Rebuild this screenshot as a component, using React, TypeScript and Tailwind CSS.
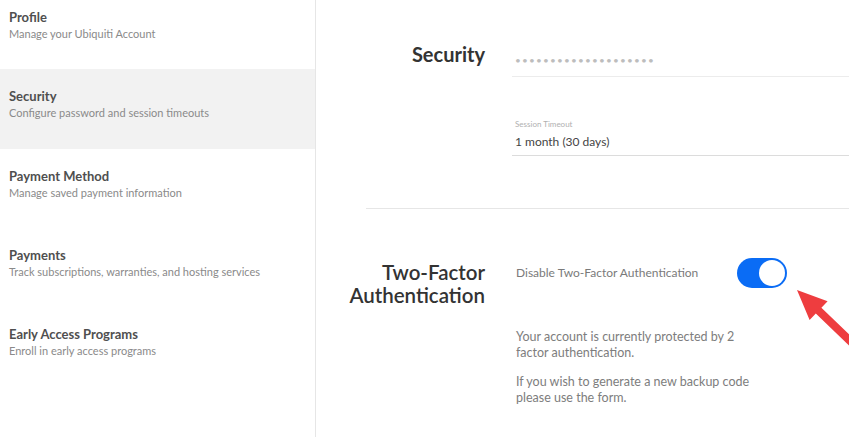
import React from "react";

const NAV = [
  { title: "Profile", sub: "Manage your Ubiquiti Account" },
  { title: "Security", sub: "Configure password and session timeouts", active: true },
  { title: "Payment Method", sub: "Manage saved payment information" },
  { title: "Payments", sub: "Track subscriptions, warranties, and hosting services" },
  { title: "Early Access Programs", sub: "Enroll in early access programs" },
];

function Sidebar() {
  return (
    <aside className="w-[316px] shrink-0 border-r border-[#e6e6e6]">
      <ul className="-mt-[10px]">
        {NAV.map((item) => (
          <li
            key={item.title}
            className={`h-[79.3px] pl-[9px] pt-[19px] ${item.active ? "bg-[#f2f2f2]" : ""}`}
          >
            <p className="text-[13px] font-bold leading-[16px] text-[#4f4f4f]">{item.title}</p>
            <p className="mt-[2px] text-[11px] leading-[14px] text-[#8a8a8a]">{item.sub}</p>
          </li>
        ))}
      </ul>
    </aside>
  );
}

function Toggle() {
  return (
    <div className="flex h-[30px] w-[50px] items-center justify-end rounded-full bg-[#0a6cf5] pr-[2px]">
      <div className="h-[26px] w-[26px] rounded-full bg-white" />
    </div>
  );
}

export default function App() {
  return (
    <div className="relative flex h-[437px] w-[849px] overflow-hidden bg-white font-['Lato',sans-serif]">
      <Sidebar />

      <main className="flex-1 pt-[42px]">
        <section className="flex">
          <h2 className="w-[169px] shrink-0 text-right text-[20px] font-bold leading-[24px] text-[#333]">
            Security
          </h2>
          <div className="ml-[27px] flex-1">
            <div className="mt-[2px] flex h-[33px] items-center border-b border-[#ececec] pl-[3px] text-[10px] tracking-[1.2px] text-[#bdbdbd]">
              ••••••••••••••••••••
            </div>
            <div className="mt-[42px] border-b border-[#dcdcdc] pb-[5px] pl-[3px]">
              <p className="text-[8px] leading-[10px] text-[#b0b0b0]">Session Timeout</p>
              <p className="mt-[5px] text-[12px] leading-[16px] text-[#444]">1 month (30 days)</p>
            </div>
          </div>
        </section>

        <div className="ml-[50px] mt-[52px] border-t border-[#e6e6e6]" />

        <section className="flex">
          <h2 className="w-[169px] shrink-0 pt-[52px] text-right text-[20.5px] font-semibold leading-[23px] text-[#333]">
            Two-Factor Authentication
          </h2>
          <div className="ml-[27px] flex-1 pl-[4px]">
            <div className="mt-[49px] flex items-center">
              <span className="w-[221px] text-[12px] text-[#7a7a7a]">Disable Two-Factor Authentication</span>
              <Toggle />
            </div>
            <p className="mt-[41px] text-[12.5px] leading-[15.5px] text-[#7d7d7d]">
              Your account is currently protected by 2
              <br />
              factor authentication.
            </p>
            <p className="mt-[14px] text-[12.5px] leading-[15.5px] text-[#7d7d7d]">
              If you wish to generate a new backup code
              <br />
              please use the form.
            </p>
          </div>
        </section>
      </main>

      <svg className="absolute left-[790px] top-[280px] h-[70px] w-[70px]" viewBox="0 0 70 70">
        <polygon
          points="7,10 37.6,21.3 31.4,27.8 67.4,62.4 61.8,68.1 25.8,33.6 19.6,40.1"
          fill="#ee3d3f"
        />
      </svg>
    </div>
  );
}
